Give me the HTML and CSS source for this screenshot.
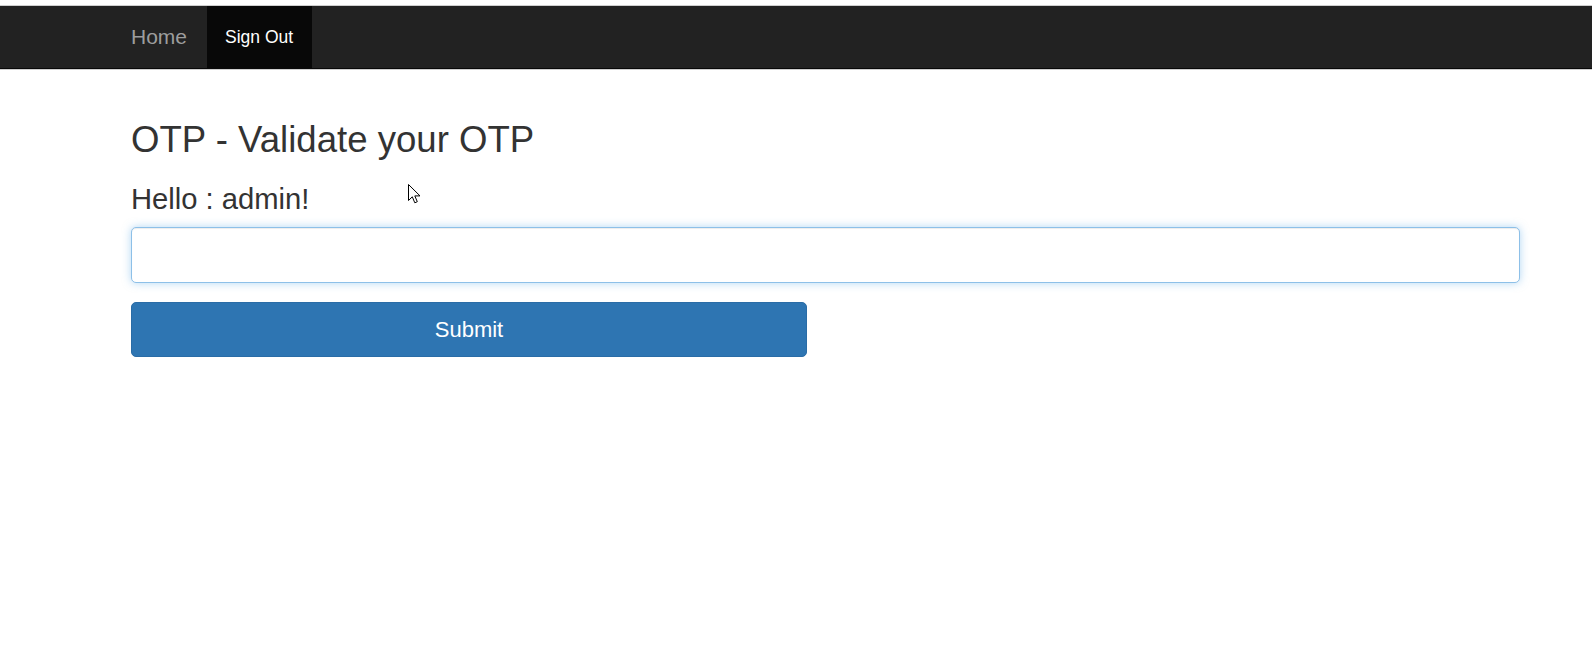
FILE: index.html
```html
<!DOCTYPE html>
<html lang="en">
<head>
<meta charset="utf-8">
<title>OTP - Validate your OTP</title>
<link rel="stylesheet" href="styles.css">
</head>
<body>
<nav class="navbar">
  <ul class="nav">
    <li><a class="nav-link home" href="#">Home</a></li>
    <li><a class="nav-link active" href="#">Sign Out</a></li>
  </ul>
</nav>
<main class="container">
  <h2 class="title">OTP - Validate your OTP</h2>
  <h4 class="hello">Hello : admin!</h4>
  <form class="otp-form" onsubmit="return false;">
    <input class="otp-input" type="text" aria-label="OTP">
    <button class="btn-submit" type="submit">Submit</button>
  </form>
</main>
<svg class="cursor" width="14" height="21" viewBox="0 0 14 21" aria-hidden="true">
  <path d="M0.5 0.5 L0.5 16.5 L4.3 12.8 L6.8 18.8 L9.3 17.7 L6.8 11.9 L12 11.9 Z" fill="#fff" stroke="#000" stroke-width="1" stroke-linejoin="miter"/>
</svg>
</body>
</html>
```
FILE: styles.css
```css
html, body {
  margin: 0;
  padding: 0;
  background: #fff;
}
body {
  padding-top: 5px;
  font-family: "Liberation Sans", Arial, Helvetica, sans-serif;
  color: #333;
}
.navbar {
  background: #222;
  border-top: 1px solid #cfcfcf;
  border-bottom: 1px solid #080808;
  box-shadow: 0 1px 0 #cfcfcf;
  height: 62px;
}
.nav {
  list-style: none;
  margin: 0;
  padding: 0 0 0 112px;
  display: flex;
  height: 100%;
}
.nav li {
  display: flex;
}
.nav-link {
  display: flex;
  align-items: center;
  text-decoration: none;
  height: 100%;
}
.home {
  padding: 0 20px 0 19px;
  color: #9d9d9d;
  font-size: 21px;
}
.active {
  padding: 0 19px 0 18px;
  background: #080808;
  color: #fff;
  font-size: 17.5px;
}
.container {
  padding: 51px 72px 0 131px;
}
.title {
  margin: 0;
  font-size: 36.6px;
  line-height: 40px;
  font-weight: normal;
}
.hello {
  margin: 23px 0 0;
  font-size: 29.2px;
  line-height: 32px;
  font-weight: normal;
}
.otp-form {
  margin-top: 12px;
  display: flex;
  flex-direction: column;
  align-items: flex-start;
  gap: 19px;
}
.otp-input {
  box-sizing: border-box;
  width: 100%;
  height: 56px;
  margin: 0;
  border: 1px solid #8dc0e8;
  border-radius: 5px;
  outline: none;
  background: #fff;
  box-shadow: inset 0 1px 1px rgba(0,0,0,.075), 0 0 8px rgba(102,175,233,.5);
  font-family: inherit;
  font-size: 21px;
  padding: 0 16px;
}
.btn-submit {
  box-sizing: border-box;
  width: 676px;
  height: 55px;
  margin: 0;
  border: 1px solid #2a6ca6;
  border-radius: 5px;
  background: #2e75b2;
  color: #fff;
  font-family: inherit;
  font-size: 22px;
  cursor: pointer;
}
.cursor {
  position: absolute;
  left: 408px;
  top: 184px;
}
```
